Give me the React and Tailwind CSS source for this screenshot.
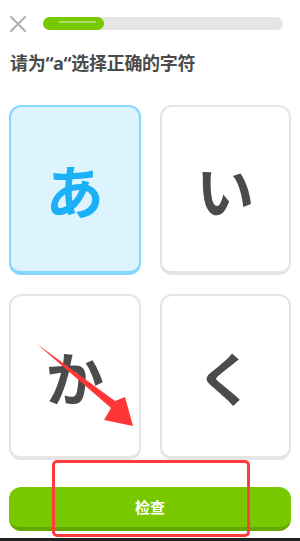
import React from 'react';

const cjk = { fontFamily: '"Noto Sans CJK SC", "Noto Sans", sans-serif' };
const latin = { fontFamily: '"Noto Sans", sans-serif' };

const Card = ({ char, selected }) => (
  <div
    className={
      'flex items-center justify-center rounded-xl border-2 border-b-4 ' +
      (selected ? 'bg-[#ddf4ff] border-[#84d8ff] text-[#1cb0f6]' : 'bg-white border-[#e5e5e5] text-[#4b4b4b]')
    }
  >
    <span className="text-[58px] font-bold leading-none" style={cjk}>{char}</span>
  </div>
);

export default function App() {
  return (
    <div className="relative w-[300px] h-[541px] bg-white overflow-hidden flex flex-col" style={cjk}>
      {/* top bar */}
      <div className="flex items-center h-[13px] mt-[17px] pl-[10px] pr-[17px] gap-[17px]">
        <svg width="16" height="16" viewBox="0 0 16 16" className="shrink-0">
          <path d="M1 1 L15 15 M15 1 L1 15" stroke="#afafaf" strokeWidth="2" strokeLinecap="round" />
        </svg>
        <div className="flex-1 h-[13px] rounded-full bg-[#e5e5e5]">
          <div className="relative w-[61px] h-full rounded-full bg-[#78c800]">
            <div className="absolute left-[16px] right-[8px] top-[4px] h-[2px] rounded-full bg-white/40" />
          </div>
        </div>
      </div>

      <h1 className="mt-[20px] ml-[10px] text-[18px] font-bold leading-[24px] tracking-[-0.3px] text-[#4b4b4b]">
        请为<span style={latin}>“a“</span>选择正确的字符
      </h1>

      {/* choices */}
      <div className="grid grid-cols-2 gap-x-[19px] gap-y-[19px] px-[9px] mt-[30px] grid-rows-[170px_166px]">
        <Card char="あ" selected />
        <Card char="い" />
        <Card char="か" />
        <Card char="く" />
      </div>

      <button className="mx-[9px] mt-[27px] h-[44px] rounded-xl bg-[#78c800] border-b-4 border-[#64a800] text-white text-[15px] font-bold">
        检查
      </button>

      <div className="mt-auto h-[3px] bg-[#222]" />

      {/* annotation overlay */}
      <div className="absolute left-[52px] top-[460px] w-[198px] h-[77px] border-[3px] border-[#ff3b3b] rounded-[5px]" />
      <svg className="absolute left-0 top-0 pointer-events-none" width="300" height="541">
        <polygon points="37,344 115,401 125,397 133,426 104,420 111,408" fill="#ff3636" />
      </svg>
    </div>
  );
}
